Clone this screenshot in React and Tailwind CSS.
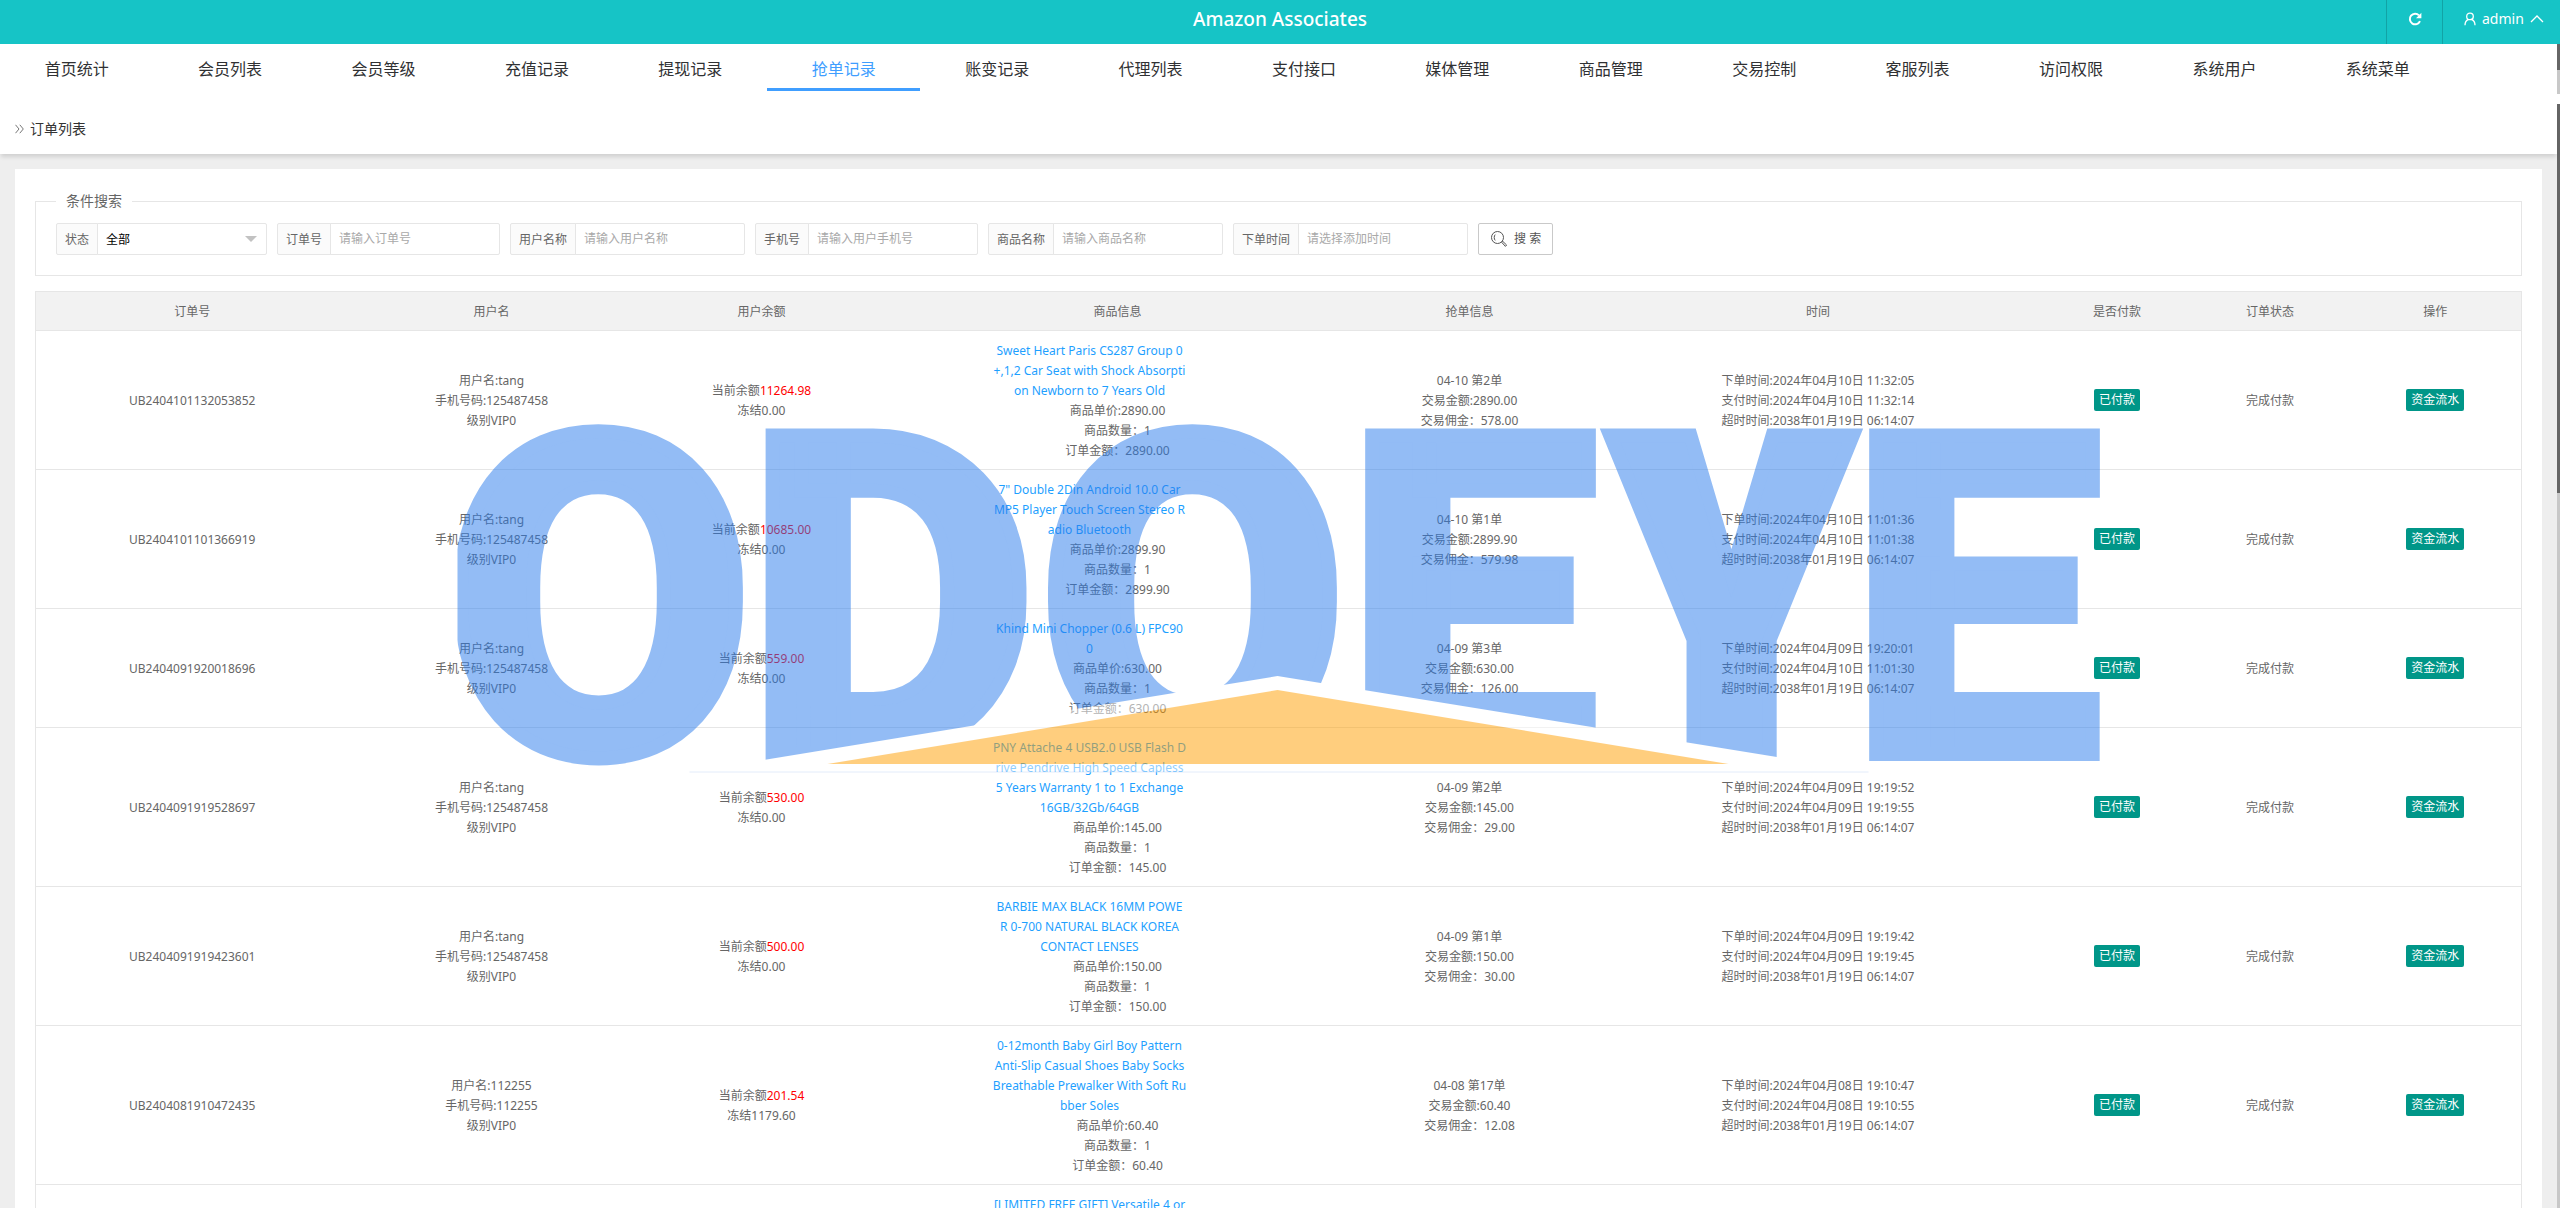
import React from 'react';

const TABS = [
  '首页统计', '会员列表', '会员等级', '充值记录', '提现记录', '抢单记录', '账变记录', '代理列表',
  '支付接口', '媒体管理', '商品管理', '交易控制', '客服列表', '访问权限', '系统用户', '系统菜单'
];

const FILTERS = [
  { id: 'order-no', label: '订单号', placeholder: '请输入订单号' },
  { id: 'user-name', label: '用户名称', placeholder: '请输入用户名称' },
  { id: 'phone', label: '手机号', placeholder: '请输入用户手机号' },
  { id: 'goods', label: '商品名称', placeholder: '请输入商品名称' },
  { id: 'order-time', label: '下单时间', placeholder: '请选择添加时间' }
];

const COLUMNS = [
  { name: '订单号', width: 'w-[313px]' },
  { name: '用户名', width: 'w-[286px]' },
  { name: '用户余额', width: 'w-[254px]' },
  { name: '商品信息', width: 'w-[458px]' },
  { name: '抢单信息', width: 'w-[246px]' },
  { name: '时间', width: 'w-[451px]' },
  { name: '是否付款', width: 'w-[147px]' },
  { name: '订单状态', width: 'w-[159px]' },
  { name: '操作', width: 'w-[172px]' }
];

const ORDERS = [
  {
    no: 'UB2404101132053852', user: 'tang', phone: '125487458', balance: '11264.98', frozen: '0.00',
    title: ['Sweet Heart Paris CS287 Group 0', '+,1,2 Car Seat with Shock Absorpti', 'on Newborn to 7 Years Old'],
    price: '2890.00', nth: '04-10 第2单', commission: '578.00',
    placed: '2024年04月10日 11:32:05', paid: '2024年04月10日 11:32:14'
  },
  {
    no: 'UB2404101101366919', user: 'tang', phone: '125487458', balance: '10685.00', frozen: '0.00',
    title: ['7" Double 2Din Android 10.0 Car', 'MP5 Player Touch Screen Stereo R', 'adio Bluetooth'],
    price: '2899.90', nth: '04-10 第1单', commission: '579.98',
    placed: '2024年04月10日 11:01:36', paid: '2024年04月10日 11:01:38'
  },
  {
    no: 'UB2404091920018696', user: 'tang', phone: '125487458', balance: '559.00', frozen: '0.00',
    title: ['Khind Mini Chopper (0.6 L) FPC90', '0'],
    price: '630.00', nth: '04-09 第3单', commission: '126.00',
    placed: '2024年04月09日 19:20:01', paid: '2024年04月10日 11:01:30'
  },
  {
    no: 'UB2404091919528697', user: 'tang', phone: '125487458', balance: '530.00', frozen: '0.00',
    title: ['PNY Attache 4 USB2.0 USB Flash D', 'rive Pendrive High Speed Capless', '5 Years Warranty 1 to 1 Exchange', '16GB/32Gb/64GB'],
    price: '145.00', nth: '04-09 第2单', commission: '29.00',
    placed: '2024年04月09日 19:19:52', paid: '2024年04月09日 19:19:55'
  },
  {
    no: 'UB2404091919423601', user: 'tang', phone: '125487458', balance: '500.00', frozen: '0.00',
    title: ['BARBIE MAX BLACK 16MM POWE', 'R 0-700 NATURAL BLACK KOREA', 'CONTACT LENSES'],
    price: '150.00', nth: '04-09 第1单', commission: '30.00',
    placed: '2024年04月09日 19:19:42', paid: '2024年04月09日 19:19:45'
  },
  {
    no: 'UB2404081910472435', user: '112255', phone: '112255', balance: '201.54', frozen: '1179.60',
    title: ['0-12month Baby Girl Boy Pattern', 'Anti-Slip Casual Shoes Baby Socks', 'Breathable Prewalker With Soft Ru', 'bber Soles'],
    price: '60.40', nth: '04-08 第17单', commission: '12.08',
    placed: '2024年04月08日 19:10:47', paid: '2024年04月08日 19:10:55'
  }
];

function RefreshIcon() {
  return (
    <svg viewBox="0 0 14 14" className="w-3.5 h-3.5" fill="none" stroke="currentColor" strokeWidth="2">
      <path d="M12 9.2A5.3 5.3 0 1 1 11 3.4" />
      <path d="M13.4 0.8V6.2H8Z" fill="currentColor" stroke="none" />
    </svg>
  );
}

function UserIcon() {
  return (
    <svg viewBox="0 0 12 14" className="w-3 h-3.5" fill="none" stroke="currentColor" strokeWidth="1.3">
      <circle cx="6" cy="4.4" r="3.3" />
      <path d="M1 13.2C1 10.2 2.4 8.3 4.3 7.3M11 13.2C11 10.2 9.6 8.3 7.7 7.3" />
    </svg>
  );
}

function SearchIcon() {
  return (
    <svg viewBox="0 0 18 18" className="w-[18px] h-[18px]" fill="none" stroke="currentColor" strokeWidth="1">
      <circle cx="7.5" cy="7.5" r="6" />
      <path d="M5.2 4.6C3.9 6 3.9 9 5.2 10.4" />
      <path d="M11.6 12.2L12.6 11.2L16.6 15L15.4 16.4Z" />
    </svg>
  );
}

function Header() {
  return (
    <header className="relative flex h-11 shrink-0 justify-center bg-[#16c4c6] text-white">
      <h1 className="text-[19px] leading-[38px] font-medium">Amazon Associates</h1>
      <div className="absolute right-0 top-0 flex h-full">
        <button aria-label="刷新" className="flex w-14 justify-center border-l border-[#12a3a5] pt-3">
          <RefreshIcon />
        </button>
        <button className="flex w-[118px] border-l border-[#12a3a5] pl-[21px] text-sm leading-[38px]">
          <span className="flex h-[38px] items-center gap-1.5">
            <UserIcon />
            admin
            <svg viewBox="0 0 14 8" className="w-3.5 h-2" fill="none" stroke="currentColor" strokeWidth="1.3">
              <path d="M1 7L7 1L13 7" />
            </svg>
          </span>
        </button>
      </div>
    </header>
  );
}

function Nav() {
  return (
    <div className="flex h-[60px] shrink-0 bg-white">
      <nav className="flex flex-1 items-start">
        {TABS.map((tab) => (
          <a
            key={tab}
            href="#"
            className={`w-[6%] border-b-[3px] pt-[9px] pb-[3px] text-center text-base leading-8 ${
              tab === '抢单记录' ? 'border-[#409eff] text-[#409eff]' : 'border-transparent text-[#303133]'
            }`}
          >
            {tab}
          </a>
        ))}
      </nav>
      <div className="h-[50px] w-[3px] bg-[#c8c8c8]">
        <div className="h-[26px] bg-[#666]" />
      </div>
    </div>
  );
}

function Filters() {
  return (
    <fieldset className="border border-[#e6e6e6] pb-5">
      <legend className="ml-5 px-2.5 text-sm leading-5">条件搜索</legend>
      <form className="flex gap-2.5 px-5 pt-3 leading-8">
        <div className="flex h-8">
          <label htmlFor="status" className="rounded-l-xs border border-[#e6e6e6] bg-[#fbfbfb] px-2">状态</label>
          <div className="relative -ml-px">
            <select id="status" className="h-8 w-[170px] appearance-none rounded-r-xs border border-[#e6e6e6] bg-white pl-2 text-black">
              <option>全部</option>
            </select>
            <span className="pointer-events-none absolute right-2.5 top-[13px] border-x-6 border-t-6 border-x-transparent border-t-[#c2c2c2]" />
          </div>
        </div>
        {FILTERS.map(({ id, label, placeholder }) => (
          <div key={id} className="flex h-8">
            <label htmlFor={id} className="rounded-l-xs border border-[#e6e6e6] bg-[#fbfbfb] px-2">{label}</label>
            <input
              id={id}
              type="text"
              placeholder={placeholder}
              className="-ml-px h-8 w-[170px] rounded-r-xs border border-[#e6e6e6] pl-2 placeholder:text-[#a9a9a9]"
            />
          </div>
        ))}
        <button type="button" className="flex h-8 w-[75px] items-center justify-center gap-1.5 rounded-xs border border-[#c9c9c9] bg-white text-[#555]">
          <SearchIcon />
          搜 索
        </button>
      </form>
    </fieldset>
  );
}

function OrderRow({ order }) {
  return (
    <tr className="border-b border-[#e6e6e6]">
      <td className="pt-2.5 pb-2">{order.no}</td>
      <td className="pt-2.5 pb-2">
        <p>用户名:{order.user}</p>
        <p>手机号码:{order.phone}</p>
        <p>级别VIP0</p>
      </td>
      <td className="pt-2.5 pb-2">
        <p>当前余额<span className="text-[#ff0000]">{order.balance}</span></p>
        <p>冻结{order.frozen}</p>
      </td>
      <td className="pt-2.5 pb-2">
        <div className="mx-auto w-64">
          <a href="#" className="block w-50 whitespace-nowrap text-[#1e9fff]">
            {order.title.map((line) => (
              <span key={line} className="block">{line}</span>
            ))}
          </a>
          <p>商品单价:{order.price}</p>
          <p>商品数量：1</p>
          <p>订单金额：{order.price}</p>
        </div>
      </td>
      <td className="pt-2.5 pb-2">
        <p>{order.nth}</p>
        <p>交易金额:{order.price}</p>
        <p>交易佣金：{order.commission}</p>
      </td>
      <td className="pt-2.5 pb-2">
        <p>下单时间:{order.placed}</p>
        <p>支付时间:{order.paid}</p>
        <p>超时时间:2038年01月19日 06:14:07</p>
      </td>
      <td>
        <button className="h-[22px] rounded-xs bg-[#009688] px-[5px] align-middle leading-[22px] text-white">已付款</button>
      </td>
      <td className="pt-2.5 pb-2">完成付款</td>
      <td>
        <button className="h-[22px] rounded-xs bg-[#009688] px-[5px] align-middle leading-[22px] text-white">资金流水</button>
      </td>
    </tr>
  );
}

function OrderTable() {
  return (
    <table className="mt-[15px] w-full table-fixed border-collapse border border-[#e6e6e6] text-center">
      <thead>
        <tr className="border-b border-[#e6e6e6] bg-[#f2f2f2]">
          {COLUMNS.map(({ name, width }) => (
            <th key={name} className={`pt-2.5 pb-2 font-normal ${width}`}>{name}</th>
          ))}
        </tr>
      </thead>
      <tbody>
        {ORDERS.map((order) => (
          <OrderRow key={order.no} order={order} />
        ))}
        <tr className="h-[159px] align-top">
          <td colSpan={3} />
          <td className="pt-2.5 pb-2">
            <div className="mx-auto w-64">
              <a href="#" className="block w-50 whitespace-nowrap text-[#1e9fff]">[LIMITED FREE GIFT] Versatile 4 or</a>
            </div>
          </td>
          <td colSpan={5} />
        </tr>
      </tbody>
    </table>
  );
}

function Watermark() {
  return (
    <svg
      viewBox="456 420 1645 360"
      className="pointer-events-none absolute left-1/2 top-[420px] w-[1645px] -translate-x-1/2 opacity-50"
    >
      <text
        x="597 890 1191 1470 1730 1974"
        y="754"
        textAnchor="middle"
        fill="#297bec"
        stroke="#297bec"
        strokeWidth="14"
        className="font-[Roboto,sans-serif] text-[448px] font-extrabold"
      >
        ODOE<tspan className="font-['Roboto_Condensed',Roboto,sans-serif] font-black">Y</tspan>E
      </text>
      <path d="M688 772L1276 676L1867 772Z" fill="#fff" />
      <path d="M688 772H1867" stroke="#c9dcf8" />
      <path d="M826 764L1276 690L1727 764Z" fill="#ff9f00" />
    </svg>
  );
}

export default function App() {
  return (
    <div className="relative flex h-screen flex-col overflow-hidden bg-white font-['Noto_Sans','Noto_Sans_CJK_SC',sans-serif]">
      <Header />
      <Nav />
      <div className="flex min-h-0 flex-1">
        <div className="flex min-w-0 flex-1 flex-col bg-[#eee]">
          <div className="z-10 flex h-[50px] shrink-0 items-center gap-1.5 bg-white pl-[15px] text-sm text-[#333] shadow-[0_4px_4px_-1px_rgba(0,0,0,0.12)]">
            <svg viewBox="0 0 9 10" className="w-[9px] h-2.5 text-[#777]" fill="none" stroke="currentColor">
              <path d="M0.5 0.8L4 5L0.5 9.2M4.8 0.8L8.3 5L4.8 9.2" />
            </svg>
            订单列表
          </div>
          <main className="mx-[15px] mt-[15px] min-h-0 flex-1 overflow-hidden bg-white px-5 pt-[22px] text-xs leading-5 text-[#666]">
            <Filters />
            <OrderTable />
          </main>
        </div>
        <div className="w-[3px] bg-[#c8c8c8]">
          <div className="h-[35.2%] bg-[#666]" />
        </div>
      </div>
      <Watermark />
    </div>
  );
}
